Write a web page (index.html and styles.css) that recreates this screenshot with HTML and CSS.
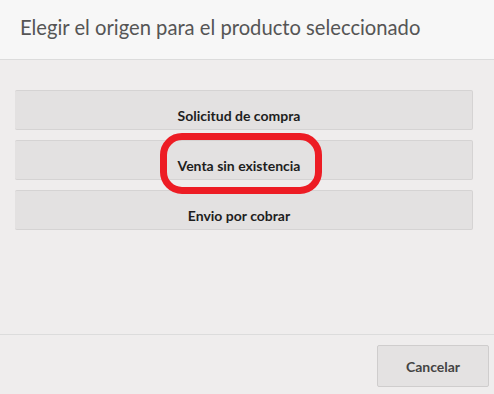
FILE: index.html
```html
<!DOCTYPE html>
<html lang="es">
<head>
  <meta charset="UTF-8" />
  <title>Elegir origen</title>
  <link rel="stylesheet" href="styles.css">
</head>
<body>
  <div class="modal">
    <div class="modal-header">
      <h3>Elegir el origen para el producto seleccionado</h3>
    </div>

    <div class="modal-body">
      <button class="option">Solicitud de compra</button>
      <button class="option highlighted">
        Venta sin existencia
        <span class="ring"></span>
      </button>
      <button class="option">Envio por cobrar</button>
    </div>

    <div class="modal-footer">
      <button class="btn-cancel">Cancelar</button>
    </div>
  </div>
</body>
</html>
```

FILE: styles.css
```css
body {
  margin: 0;
  font-family: Lato, "Liberation Sans", sans-serif;
  background: #efeded;
}
.modal {
  width: 494px;
  height: 394px;
  display: flex;
  flex-direction: column;
}
.modal-header {
  height: 59px;
  background: #f7f7f7;
  border-bottom: 1px solid #dcdcdc;
  display: flex;
  align-items: center;
  padding-left: 20px;
}
.modal-header h3 {
  margin: 0;
  font-size: 20.2px;
  font-weight: normal;
  color: #555;
  padding-bottom: 6px;
}
.modal-body {
  height: 275px;
  box-sizing: border-box;
  padding: 30px 21px 0 15px;
  display: flex;
  flex-direction: column;
  gap: 10px;
  border-bottom: 1px solid #dcdcdc;
}
.option {
  height: 40px;
  background: #e3e1e1;
  border: 1px solid #d5d3d3;
  border-left: none;
  border-radius: 2px;
  padding: 10px 9px 0 0;
  font-family: inherit;
  font-size: 14px;
  font-weight: bold;
  color: #1e1e1e;
  text-align: center;
}
.highlighted {
  position: relative;
}
.ring {
  position: absolute;
  left: 145px;
  top: -8px;
  width: 162px;
  height: 61px;
  box-sizing: border-box;
  border: 7px solid #ed1c24;
  border-radius: 22px;
}
.modal-footer {
  flex: 1;
  display: flex;
  justify-content: flex-end;
  align-items: flex-start;
  padding: 10px 5px 0 0;
}
.btn-cancel {
  width: 112px;
  height: 42px;
  background: #e4e2e2;
  border: 1px solid #cfcdcd;
  border-radius: 2px;
  font-family: inherit;
  font-size: 14px;
  font-weight: bold;
  color: #444;
}
```
